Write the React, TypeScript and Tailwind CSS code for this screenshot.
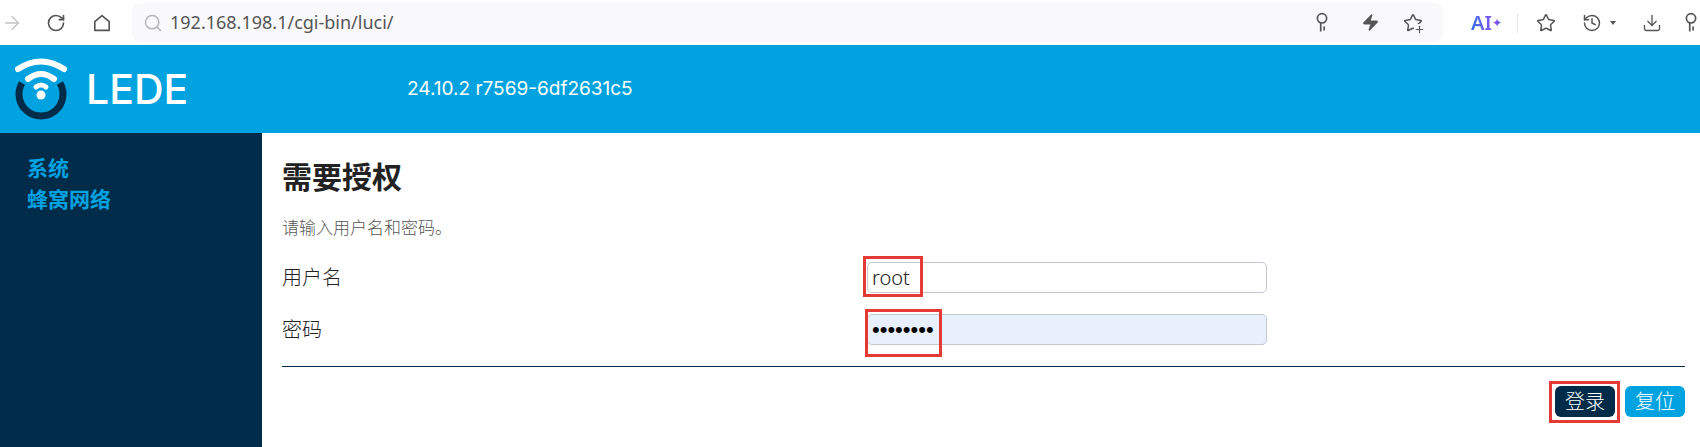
import { ArrowRight, Download, History, Plus, RotateCw, Search, Star, Zap } from 'lucide-react';

const uiFont = { fontFamily: '"Noto Sans", "Noto Sans CJK SC", sans-serif' };

function KeyIcon({ className }: { className?: string }) {
    return (
        <svg viewBox="0 0 16 26" className={className} fill="none" stroke="#555" strokeWidth="2">
            <circle cx="8" cy="7.5" r="5.5" />
            <path d="M6.5 13v10M10.5 17v5" />
        </svg>
    );
}

function HomeIcon({ className }: { className?: string }) {
    return (
        <svg viewBox="0 0 20 20" className={className} fill="none" stroke="#555" strokeWidth="1.8" strokeLinejoin="round">
            <path d="M2 8.5 10 1.8l8 6.7v9.7H2z" />
        </svg>
    );
}

function Logo() {
    return (
        <svg viewBox="0 0 56 66" className="w-[56px] h-[66px]" fill="none">
            <path d="M9 27 A22 22 0 1 0 47 27" stroke="#002b49" strokeWidth="7" />
            <path d="M5 13 Q28 -2 51 13" stroke="#fff" strokeWidth="6" strokeLinecap="round" />
            <path d="M15 23 Q28 13 41 23" stroke="#fff" strokeWidth="6" strokeLinecap="round" />
            <path d="M23 31 Q28 27 33 31" stroke="#fff" strokeWidth="5" strokeLinecap="round" />
            <circle cx="28" cy="39" r="4.5" fill="#fff" />
        </svg>
    );
}

function Toolbar() {
    return (
        <div className="h-[45px] bg-white flex items-center" style={uiFont}>
            <ArrowRight size={22} strokeWidth={1.5} className="ml-[1px] text-[#c4c4c4]" />
            <RotateCw size={20} strokeWidth={2} className="ml-[23px] text-[#555]" />
            <HomeIcon className="ml-[27px] w-[18px] h-[18px]" />
            <div className="ml-[21px] w-[1311px] h-[39px] rounded-lg bg-[#f9f9fb] flex items-center pl-[11px] pr-[20px]">
                <Search size={20} strokeWidth={1.8} className="text-[#b5b5b5]" />
                <span className="ml-[7px] text-[18px] text-[#555]">192.168.198.1/cgi-bin/luci/</span>
                <div className="ml-auto flex items-center">
                    <KeyIcon className="w-[14px] h-[22px]" />
                    <Zap size={19} fill="#555" strokeWidth={1} className="ml-[32px] text-[#555]" />
                    <div className="relative ml-[23px]">
                        <Star size={20} strokeWidth={1.8} className="text-[#555]" />
                        <Plus size={11} strokeWidth={2.4} className="absolute -right-[2px] -bottom-[2px] text-[#555] bg-[#f9f9fb]" />
                    </div>
                </div>
            </div>
            <span className="ml-[28px] text-[20px] font-semibold bg-gradient-to-r from-[#2f6fe6] to-[#7a55ee] bg-clip-text text-transparent">AI</span>
            <span className="text-[12px] text-[#7a55ee]">✦</span>
            <div className="ml-[15px] w-px h-[20px] bg-[#e8e8e8]" />
            <Star size={20} strokeWidth={1.8} className="ml-[18px] text-[#555]" />
            <History size={20} strokeWidth={1.8} className="ml-[26px] text-[#555]" />
            <div className="ml-[8px] w-0 h-0 border-x-[3px] border-x-transparent border-t-[4px] border-t-[#555]" />
            <Download size={20} strokeWidth={1.6} className="ml-[26px] text-[#555]" />
            <KeyIcon className="ml-[22px] w-[14px] h-[22px] shrink-0" />
        </div>
    );
}

function Field({ label, filled, children }: { label: string; filled?: boolean; children: React.ReactNode }) {
    return (
        <div className="flex items-center h-[31px] mb-[21px]">
            <label className="w-[585px] text-[20px] font-light text-[#222]">{label}</label>
            <div className={`w-[400px] h-[31px] rounded-[5px] border border-[#c4c7cf] flex items-center pl-[4px] text-[#222] ${filled ? 'bg-[#e8f0fe]' : 'bg-white'}`}>
                {children}
            </div>
        </div>
    );
}

function RedBox({ className }: { className: string }) {
    return <div className={`absolute border-[3px] border-[#e53935] pointer-events-none ${className}`} />;
}

export default function App() {
    return (
        <div className="w-[1700px] h-[447px] overflow-hidden bg-white flex flex-col" style={uiFont}>
            <Toolbar />
            <header className="h-[88px] bg-[#00a3e0] flex items-center text-white">
                <div className="ml-[13px]">
                    <Logo />
                </div>
                <span className="ml-[17px] w-[102px] text-[41px] font-medium leading-none tracking-[0px] font-['Inter']">LEDE</span>
                <span className="ml-[219px] text-[19px] font-['Inter'] tracking-[0px]">24.10.2 r7569-6df2631c5</span>
            </header>
            <div className="flex-1 flex">
                <aside className="w-[262px] bg-[#002b49] pl-[27px] pt-[20px] text-[#00a3e0] text-[21px] font-bold leading-[31px]">
                    <div>系统</div>
                    <div>蜂窝网络</div>
                </aside>
                <main className="relative flex-1 pl-[20px] pr-[15px]">
                    <h2 className="mt-[26px] text-[30px] font-bold leading-[36px] text-[#222]">需要授权</h2>
                    <p className="mt-[21px] text-[17px] font-light leading-[24px] text-[#555]">请输入用户名和密码。</p>
                    <div className="mt-[22px]">
                        <Field label="用户名">
                            <span className="text-[20px] font-light">root</span>
                        </Field>
                        <Field label="密码" filled>
                            <span className="text-[22px] leading-none font-['Liberation_Sans'] text-black">••••••••</span>
                        </Field>
                    </div>
                    <div className="mt-[1px] border-t border-[#002b49]" />
                    <div className="mt-[19px] flex justify-end gap-[10px]">
                        <button className="w-[60px] h-[31px] rounded-[6px] bg-[#002b49] text-white text-[20px] font-light leading-none">登录</button>
                        <button className="w-[60px] h-[31px] rounded-[6px] bg-[#00a3e0] text-white text-[20px] font-light leading-none">复位</button>
                    </div>
                    <RedBox className="left-[601px] top-[123px] w-[60px] h-[41px]" />
                    <RedBox className="left-[603px] top-[176px] w-[77px] h-[48px]" />
                    <RedBox className="left-[1287px] top-[248px] w-[71px] h-[42px]" />
                </main>
            </div>
        </div>
    );
}
